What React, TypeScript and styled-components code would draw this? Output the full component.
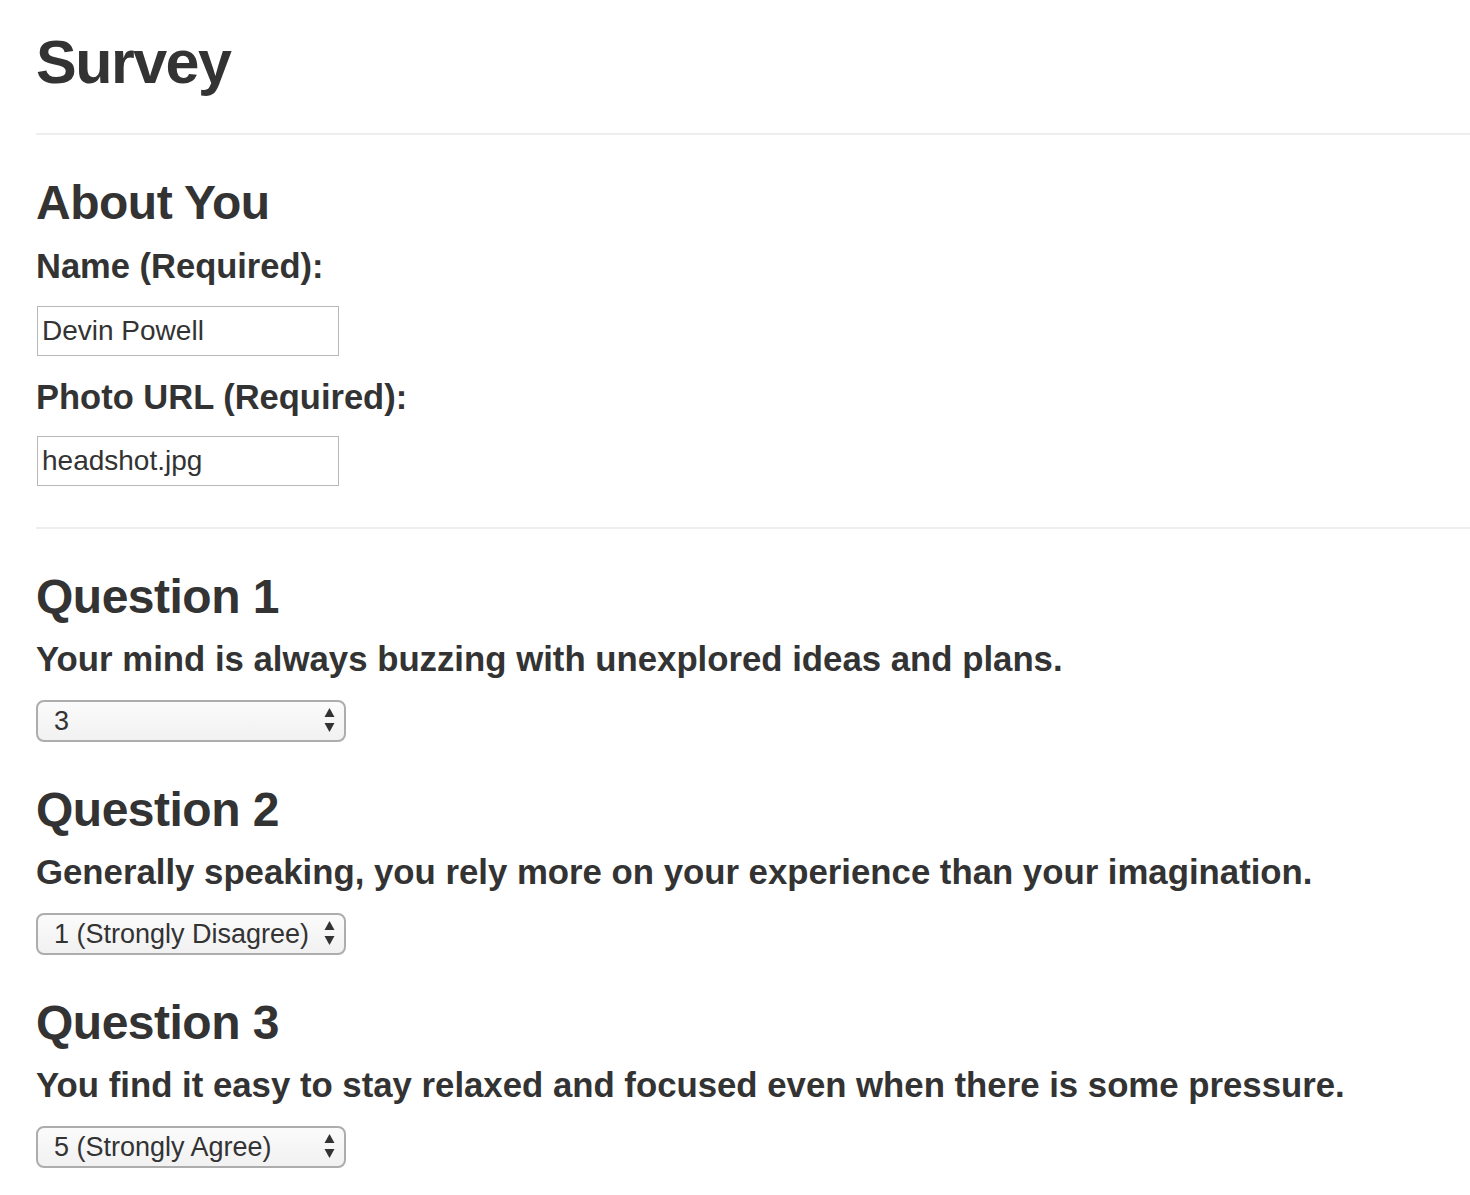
import React from 'react'
import styled, { createGlobalStyle } from 'styled-components'

const GlobalStyle = createGlobalStyle`
  html, body {
    margin: 0;
    padding: 0;
    background: #fff;
  }
  body {
    font-family: 'Liberation Sans', Arial, Helvetica, sans-serif;
    color: #333;
  }
`

// Page container
const SPage = styled.div`
  padding: 0 0 40px 36px;
`

const STitle = styled.h1`
  margin: 28px 0 0;
  font-size: 61px;
  line-height: 68px;
  font-weight: 700;
  letter-spacing: -1.5px;
`

const SRule = styled.hr<{ $gap?: number }>`
  margin: ${p => p.$gap ?? 37}px 0 0;
  border: 0;
  border-top: 2px solid #eee;
  height: 0;
`

const SSectionTitle = styled.h2`
  margin: 41px 0 0;
  font-size: 48px;
  line-height: 54px;
  font-weight: 700;
  letter-spacing: -0.5px;
`

const SLabel = styled.label<{ $gap?: number }>`
  display: block;
  margin-top: ${p => p.$gap ?? 16}px;
  font-size: 34.5px;
  line-height: 40px;
  font-weight: 700;
`

const SQuestionText = styled(SLabel)`
  font-size: 34.75px;
`

const STextInput = styled.input<{ $gap?: number }>`
  display: block;
  box-sizing: border-box;
  margin: ${p => p.$gap ?? 20}px 0 0 1px;
  width: 302px;
  height: 50px;
  padding: 0 4px;
  border: 1px solid #b8b8b8;
  border-radius: 0;
  background: #fff;
  font-family: inherit;
  font-size: 28px;
  color: #333;
  outline: none;
`

const SSelectWrap = styled.div`
  position: relative;
  margin-top: 21px;
  width: 310px;
  height: 42px;
`

const SSelect = styled.select`
  appearance: none;
  -webkit-appearance: none;
  box-sizing: border-box;
  width: 100%;
  height: 100%;
  margin: 0;
  padding: 0 30px 0 16px;
  border: 2px solid #adadad;
  border-radius: 8px;
  background: linear-gradient(#fbfbfb, #f1f1f1);
  font-family: inherit;
  font-size: 27px;
  color: #333;
  outline: none;
`

// Up/down arrows drawn over the select
const SArrows = styled.svg`
  position: absolute;
  right: 11px;
  top: 8px;
  width: 11px;
  height: 25px;
  pointer-events: none;
`

const OPTIONS = ['1 (Strongly Disagree)', '2', '3', '4', '5 (Strongly Agree)']

const QUESTIONS = [
  { text: 'Your mind is always buzzing with unexplored ideas and plans.', value: '3' },
  {
    text: 'Generally speaking, you rely more on your experience than your imagination.',
    value: '1 (Strongly Disagree)',
  },
  {
    text: 'You find it easy to stay relaxed and focused even when there is some pressure.',
    value: '5 (Strongly Agree)',
  },
]

const Stepper = () => (
  <SArrows viewBox='0 0 11 25'>
    <path d='M5.5 0 L10.5 9 L0.5 9 Z' fill='#333' />
    <path d='M0.5 15 L10.5 15 L5.5 24 Z' fill='#333' />
  </SArrows>
)

export default function App() {
  return (
    <SPage>
      <GlobalStyle />
      <STitle>Survey</STitle>
      <SRule />

      <SSectionTitle>About You</SSectionTitle>
      <SLabel htmlFor='name'>Name (Required):</SLabel>
      <STextInput id='name' type='text' defaultValue='Devin Powell' />
      <SLabel htmlFor='photo' $gap={21}>
        Photo URL (Required):
      </SLabel>
      <STextInput id='photo' type='text' defaultValue='headshot.jpg' $gap={19} />
      <SRule $gap={41} />

      {QUESTIONS.map((q, i) => (
        <div key={i}>
          <SSectionTitle>Question {i + 1}</SSectionTitle>
          <SQuestionText htmlFor={`q${i + 1}`} $gap={15}>
            {q.text}
          </SQuestionText>
          <SSelectWrap>
            <SSelect id={`q${i + 1}`} defaultValue={q.value}>
              {OPTIONS.map(o => (
                <option key={o} value={o}>
                  {o}
                </option>
              ))}
            </SSelect>
            <Stepper />
          </SSelectWrap>
        </div>
      ))}
    </SPage>
  )
}
